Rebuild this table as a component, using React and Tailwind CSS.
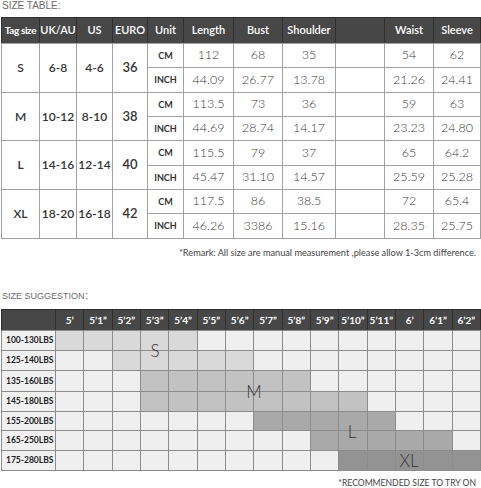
import React from "react";

const sizes = [
  { tag: "S", uk: "6-8", us: "4-6", eu: "36", cm: ["112", "68", "35", "", "54", "62"], inch: ["44.09", "26.77", "13.78", "", "21.26", "24.41"] },
  { tag: "M", uk: "10-12", us: "8-10", eu: "38", cm: ["113.5", "73", "36", "", "59", "63"], inch: ["44.69", "28.74", "14.17", "", "23.23", "24.80"] },
  { tag: "L", uk: "14-16", us: "12-14", eu: "40", cm: ["115.5", "79", "37", "", "65", "64.2"], inch: ["45.47", "31.10", "14.57", "", "25.59", "25.28"] },
  { tag: "XL", uk: "18-20", us: "16-18", eu: "42", cm: ["117.5", "86", "38.5", "", "72", "65.4"], inch: ["46.26", "3386", "15.16", "", "28.35", "25.75"] },
];

const heads = ["Tag size", "UK/AU", "US", "EURO", "Unit", "Length", "Bust", "Shoulder", "", "Waist", "Sleeve"];

const heights = ["5’", "5’1”", "5’2”", "5’3”", "5’4”", "5’5”", "5’6”", "5’7”", "5’8”", "5’9”", "5’10”", "5’11”", "6’", "6’1”", "6’2”"];
const weights = ["100-130LBS", "125-140LBS", "135-160LBS", "145-180LBS", "155-200LBS", "165-250LBS", "175-280LBS"];

// [from, to, colour] per weight row
const bands = [
  [0, 4, "bg-[#d9d9d9]"],
  [2, 6, "bg-[#d9d9d9]"],
  [3, 8, "bg-[#c2c2c2]"],
  [3, 10, "bg-[#c2c2c2]"],
  [7, 11, "bg-[#a9a9a9]"],
  [9, 13, "bg-[#a9a9a9]"],
  [10, 14, "bg-[#939393]"],
];

const cols = "grid-cols-[37px_36px_35px_34px_35px_49px_48px_52px_48px_48px_46px]";
const sugCols = "grid-cols-[53px_repeat(15,minmax(0,1fr))]";

export default function App() {
  return (
    <div className="w-[481px] h-[488px] bg-white overflow-hidden font-['Lato',sans-serif] text-[#333]">
      <div className="h-[17px] pl-[2px] pt-[1px] text-[10px] leading-[10px] text-[#6a6a6a] font-['Liberation_Sans',sans-serif]">
        SIZE TABLE:
      </div>

      {/* size table */}
      <div className="ml-px w-[480px]">
        <div className={`grid ${cols} gap-px bg-[#2f2f2f] border-t border-x border-[#2f2f2f]`}>
          {heads.map((h, i) => (
            <div
              key={i}
              className={`h-[25px] bg-[#474747] flex items-center justify-center text-white ${
                i === 0 ? "text-[10px] font-bold tracking-[-0.4px]" : "text-[11px] font-semibold"
              }`}
            >
              {h}
            </div>
          ))}
        </div>
        <div className={`grid ${cols} grid-rows-[23px_24px_23px_23px_24px_23px_23px_24px] gap-px bg-[#a0a0a0] border border-[#a0a0a0]`}>
          {sizes.map((s) => (
            <React.Fragment key={s.tag}>
              <div className="row-span-2 bg-white flex items-center justify-center text-[12px] font-semibold">{s.tag}</div>
              <div className="row-span-2 bg-white flex items-center justify-center text-[12px] font-semibold">{s.uk}</div>
              <div className="row-span-2 bg-white flex items-center justify-center text-[12px] font-semibold">{s.us}</div>
              <div className="row-span-2 bg-white flex items-center justify-center text-[13px] font-semibold">{s.eu}</div>
              <div className="bg-white flex items-center justify-center text-[9px] font-bold">CM</div>
              {s.cm.map((v, i) => (
                <div key={"c" + i} className="bg-white flex items-center justify-center text-[12.5px] font-light text-[#3a3a3a]">{v}</div>
              ))}
              <div className="bg-white flex items-center justify-center text-[9px] font-bold">INCH</div>
              {s.inch.map((v, i) => (
                <div key={"i" + i} className="bg-white flex items-center justify-center text-[12.5px] font-light text-[#3a3a3a]">{v}</div>
              ))}
            </React.Fragment>
          ))}
        </div>
      </div>

      <div className="mt-[9px] pr-[5px] text-right text-[9.2px] leading-[10px] text-[#444]">
        *Remark: All size are manual measurement ,please allow 1-3cm difference.
      </div>

      <div className="mt-[33px] pl-[2px] text-[9px] leading-[10px] text-[#6a6a6a] font-['Liberation_Sans','Noto_Sans_CJK_SC',sans-serif]">
        SIZE SUGGESTION：
      </div>

      {/* size suggestion */}
      <div className="relative ml-px mt-[8px] w-[480px]">
        <div className={`grid ${sugCols} gap-px bg-[#2f2f2f] border-t border-x border-[#2f2f2f]`}>
          <div className="h-[20px] bg-[#474747]" />
          {heights.map((h) => (
            <div key={h} className="h-[20px] bg-[#474747] flex items-center justify-center text-white text-[10px] font-bold">
              {h}
            </div>
          ))}
        </div>
        <div className={`grid ${sugCols} grid-rows-[19px_19px_20px_19px_18px_19px_19px] gap-px bg-[#8c8c8c] border border-[#8c8c8c]`}>
          {weights.map((w, r) => (
            <React.Fragment key={w}>
              <div className="bg-[#f0f0f0] flex items-center pl-[4px] text-[8.5px] font-bold text-[#222]">{w}</div>
              {heights.map((h, c) => {
                const [a, b, color] = bands[r];
                return <div key={h} className={c >= a && c <= b ? color : "bg-[#efefef]"} />;
              })}
            </React.Fragment>
          ))}
        </div>
        <div className="absolute left-[154px] top-[41px] -translate-x-1/2 -translate-y-1/2 text-[17px] font-light leading-none">S</div>
        <div className="absolute left-[253px] top-[82px] -translate-x-1/2 -translate-y-1/2 text-[17px] font-light leading-none">M</div>
        <div className="absolute left-[351px] top-[122px] -translate-x-1/2 -translate-y-1/2 text-[17px] font-light leading-none">L</div>
        <div className="absolute left-[408px] top-[151px] -translate-x-1/2 -translate-y-1/2 text-[17px] font-light leading-none">XL</div>
      </div>

      <div className="mt-[7px] pr-[5px] text-right text-[8.6px] leading-[10px] text-[#444]">*RECOMMENDED SIZE TO TRY ON</div>
    </div>
  );
}
